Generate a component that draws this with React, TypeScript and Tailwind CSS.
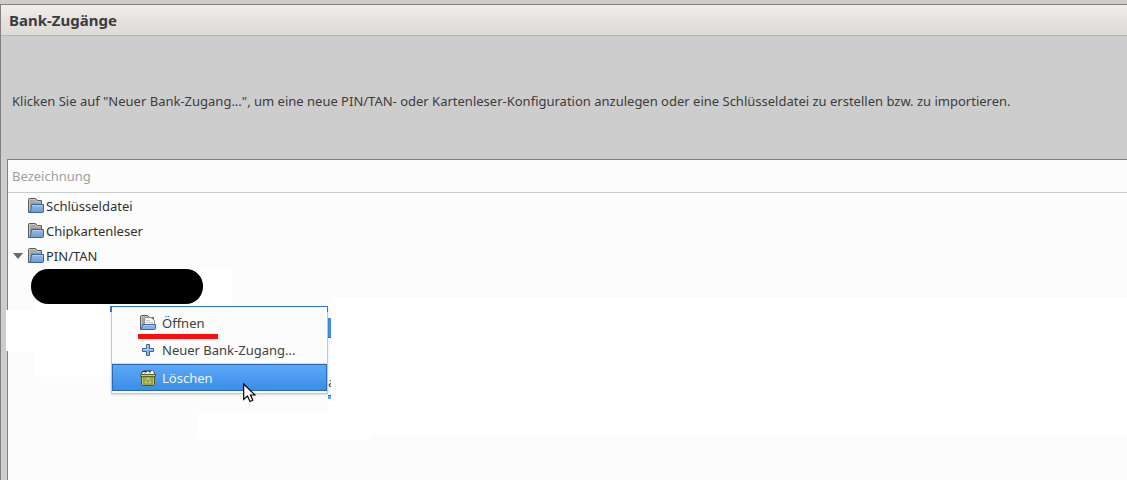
import React from "react";

function FolderBack() {
  return (
    <>
      <path d="M.5 14.500V1.500Q.5.500 1.500.500H7.500L9.500 2.500H13.500V14.500Z" fill="#a8a8a4" stroke="#5b5c59" />
      <path d="M1.500 13V1.500H7L9 3.500H12.500" fill="none" stroke="#c5c5c2" />
      <path d="M2 5.500H12M2 7.500H12" stroke="#999a96" />
    </>
  );
}

function FolderIcon() {
  return (
    <svg width="16" height="16" viewBox="0 0 16 16" aria-hidden="true" className="block shrink-0">
      <defs>
        <linearGradient id="folder-front" x1="0" y1="0" x2="0" y2="1">
          <stop offset="0" stopColor="#9abce3" />
          <stop offset="1" stopColor="#6d9bd0" />
        </linearGradient>
      </defs>
      <FolderBack />
      <path d="M3.500 6.500H15.500V13.500Q15.500 14.500 14.500 14.500H1.500L2.500 13Z" fill="url(#folder-front)" stroke="#3465a4" />
      <path d="M4.500 7.500H14.500" stroke="#b3cdea" />
    </svg>
  );
}

function OpenIcon() {
  return (
    <svg width="16" height="16" viewBox="0 0 16 16" aria-hidden="true" className="block shrink-0">
      <FolderBack />
      <path d="M4.500 10V2.500H11L14.500 5.500V10Z" fill="#f5f5f4" stroke="#92938f" />
      <path d="M6 5.500H10M6 7.500H13" stroke="#c4c5c2" />
      <path d="M2.500 9.500H15.500V13.500Q15.500 14.500 14.500 14.500H1.500Z" fill="#84afe0" stroke="#3465a4" />
      <path d="M3.500 10.500H14.500" stroke="#b3cdea" />
    </svg>
  );
}

function PlusIcon() {
  return (
    <svg width="16" height="16" viewBox="0 0 16 16" aria-hidden="true" className="block shrink-0">
      <path d="M6.500 2.500H9.500V6.500H13.500V9.500H9.500V13.500H6.500V9.500H2.500V6.500H6.500Z" fill="#8db5e3" stroke="#3465a4" strokeLinejoin="round" />
      <path d="M7.500 3V7.500H3M9 7.500H13" fill="none" stroke="#b3cfee" />
    </svg>
  );
}

function TrashIcon() {
  return (
    <svg width="16" height="16" viewBox="0 0 16 16" aria-hidden="true" className="block shrink-0">
      <path d="M1.500 6.500H14.500V14.500Q14.500 15.500 13.500 15.500H2.500Q1.500 15.500 1.500 14.500Z" fill="#9aa543" stroke="#50571f" />
      <path d="M2.500 14.500V8M13.500 14.500V8" stroke="#b9c46b" />
      <path d="M.500 4.500L2 1.500L4 .500H12L14 1.500L15.500 4.500Z" fill="#33352f" />
      <path d="M1.500 4L3 2H5L6 3L7 1.500H9L10 3L11 1H13L14.500 4Z" fill="#f4f4f2" />
      <path d="M4 3.500L5.500 2.500M9 3.500L10.500 2" stroke="#888a85" strokeWidth=".8" />
      <path d="M.500 4.500H15.500V6.500H.500Z" fill="#c5cb8c" stroke="#5b6228" />
      <path d="M6 10L7.500 8.500H9L10 10M10.500 11L9.500 13H8.500M7 13L5.500 12V11" fill="none" stroke="#d7df9e" />
    </svg>
  );
}

const cellText = "flex h-[25px] items-center text-[#303030]";

function TreeRow({ label, open = false }: { label: string; open?: boolean }) {
  return (
    <tr>
      <td className="p-0">
        <div className={cellText}>
          <span className="flex w-5 justify-center">
            {open && (
              <button type="button" aria-label="PIN/TAN einklappen" aria-expanded="true" className="block">
                <svg width="10" height="6" viewBox="0 0 10 6" className="block">
                  <path d="M0 0H10L5 6Z" fill="#686868" />
                </svg>
              </button>
            )}
          </span>
          <FolderIcon />
          <span className="pl-0.5">{label}</span>
        </div>
      </td>
    </tr>
  );
}

function ContextMenu() {
  return (
    <div
      role="menu"
      className="absolute top-[306px] left-[111px] w-[217px] border border-[#c6c6c6] border-t-[#2e76c0] bg-[#fcfcfc] py-0.5 text-[#404040] shadow-sm"
    >
      <button type="button" role="menuitem" className="flex h-[27px] w-full items-center gap-1.5 pl-7">
        <OpenIcon />
        Öffnen
      </button>
      <button type="button" role="menuitem" className="flex h-[27px] w-full items-center gap-1.5 pl-7">
        <PlusIcon />
        Neuer Bank-Zugang...
      </button>
      <div role="separator" className="h-px bg-[#dcdcdc]" />
      <button
        type="button"
        role="menuitem"
        className="flex h-[27px] w-full items-center gap-1.5 border border-[#2969b5] bg-linear-to-b from-[#5da8f8] to-[#398ee7] pl-[27px] text-[#eef5fc]"
      >
        <TrashIcon />
        Löschen
      </button>
      <span className="absolute top-[27px] left-[26px] h-[5px] w-20 bg-[#ff0d0d]" />
      <span className="absolute -top-px -left-0.5 h-1.5 w-0.5 bg-[#2e76c0]" />
      <span className="absolute -top-px -right-px h-1.5 w-px bg-[#2e76c0]" />
    </div>
  );
}

export default function App() {
  return (
    <div className="relative flex min-h-screen flex-col overflow-hidden bg-[#cdcdcd] pt-1 font-['Noto_Sans',sans-serif] text-[13px] leading-5">
      <main className="flex grow flex-col border-t border-l border-[#808080]">
        <header className="flex h-[31px] items-center border-b border-[#b5b5b5] bg-linear-to-b from-[#f1eeec] via-[#e6e2df] to-[#dedad5] pl-2">
          <h1 className="text-[15px] font-bold text-[#3c3c3c]">Bank-Zugänge</h1>
        </header>
        <p className="px-[11px] pt-[55px] pb-12 text-[#3c3c3c]">
          Klicken Sie auf "Neuer Bank-Zugang...", um eine neue PIN/TAN- oder Kartenleser-Konfiguration anzulegen oder eine
          Schlüsseldatei zu erstellen bzw. zu importieren.
        </p>
        <section className="ml-1.5 grow border-t border-l border-[#808080] bg-[#fcfcfc]">
          <table className="w-full border-separate border-spacing-0 text-left">
            <thead>
              <tr>
                <th className="h-[33px] border-b border-[#cdcdcd] py-0 pr-0 pl-1 font-normal text-[#a0a0a0]">Bezeichnung</th>
              </tr>
            </thead>
            <tbody>
              <TreeRow label="Schlüsseldatei" />
              <TreeRow label="Chipkartenleser" />
              <TreeRow label="PIN/TAN" open />
            </tbody>
          </table>
        </section>
      </main>

      <span className="absolute top-[268px] left-[35px] h-[109px] w-[197px] bg-white" />
      <span className="absolute top-[306px] left-[111px] h-[107px] w-[217px] bg-[#fcfcfc]" />
      <span className="absolute top-[310px] left-1.5 h-[41px] w-[105px] bg-white" />
      <span className="absolute top-[298px] right-0 left-[331px] h-[137px] bg-white" />
      <span className="absolute top-[318px] left-[328px] h-[95px] w-[3px] bg-white" />
      <span className="absolute top-[413px] left-[197px] h-[26px] w-[174px] bg-white" />
      <span className="absolute top-[413px] left-[328px] h-[22px] w-[3px] bg-white" />
      <span className="absolute top-[269px] left-[31px] h-[35px] w-[172px] rounded-[17px] bg-black" />
      <span className="absolute top-[318px] left-[328px] h-5 w-[3px] border-b border-[#2969b5] bg-[#3d91e9]" />
      <span className="absolute top-[372px] left-[328px] h-5 w-[3px] overflow-hidden text-[#404040]">a</span>
      <span className="absolute top-[395px] left-[328px] h-1 w-[3px] border-t border-[#2969b5] bg-[#5da8f8]" />

      <ContextMenu />

      <svg width="14" height="21" viewBox="0 0 14 21" aria-hidden="true" className="absolute top-[383px] left-[243px]">
        <path d="M.7 1V16.500L4.500 13L7 18.500L9.800 17.200L7.500 12H12Z" fill="#fff" stroke="#000" strokeWidth="1.200" />
      </svg>
    </div>
  );
}
